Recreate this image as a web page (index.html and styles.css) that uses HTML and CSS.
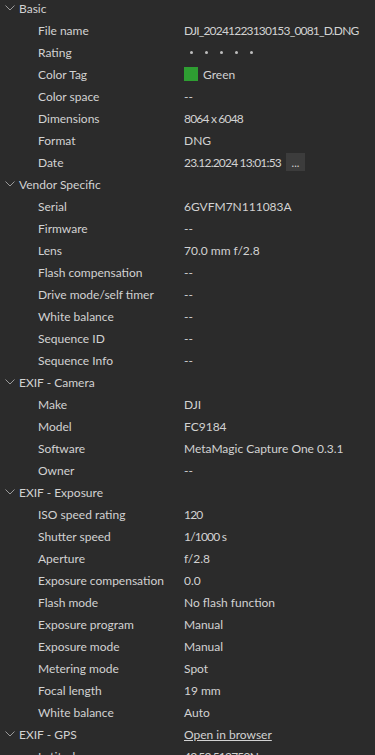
FILE: index.html
```html
<!DOCTYPE html>
<html>
<head>
<meta charset="utf-8">
<link rel="stylesheet" href="styles.css">
</head>
<body>
<div class="panel">
<div class="list">
  <div class="hdr"><svg class="chev" width="10" height="6" viewBox="0 0 10 6"><path d="M0.5 0.5 L5 5 L9.5 0.5" fill="none" stroke="#9a9a9a" stroke-width="1"/></svg><span class="hk">Basic</span></div>
  <div class="row"><span class="k">File name</span><span class="v num">DJI_20241223130153_0081_D.DNG</span></div>
  <div class="row"><span class="k">Rating</span><span class="v dots"><i></i><i></i><i></i><i></i><i></i></span></div>
  <div class="row"><span class="k">Color Tag</span><span class="v tag"><b class="sq"></b>Green</span></div>
  <div class="row"><span class="k">Color space</span><span class="v">--</span></div>
  <div class="row"><span class="k">Dimensions</span><span class="v num">8064 x 6048</span></div>
  <div class="row"><span class="k">Format</span><span class="v">DNG</span></div>
  <div class="row"><span class="k">Date</span><span class="v"><span class="num">23.12.2024 13:01:53</span><span class="btn">...</span></span></div>

  <div class="hdr"><svg class="chev" width="10" height="6" viewBox="0 0 10 6"><path d="M0.5 0.5 L5 5 L9.5 0.5" fill="none" stroke="#9a9a9a" stroke-width="1"/></svg><span class="hk">Vendor Specific</span></div>
  <div class="row"><span class="k">Serial</span><span class="v">6GVFM7N111083A</span></div>
  <div class="row"><span class="k">Firmware</span><span class="v">--</span></div>
  <div class="row"><span class="k">Lens</span><span class="v">70.0 mm f/2.8</span></div>
  <div class="row"><span class="k">Flash compensation</span><span class="v">--</span></div>
  <div class="row"><span class="k">Drive mode/self timer</span><span class="v">--</span></div>
  <div class="row"><span class="k">White balance</span><span class="v">--</span></div>
  <div class="row"><span class="k">Sequence ID</span><span class="v">--</span></div>
  <div class="row"><span class="k">Sequence Info</span><span class="v">--</span></div>

  <div class="hdr"><svg class="chev" width="10" height="6" viewBox="0 0 10 6"><path d="M0.5 0.5 L5 5 L9.5 0.5" fill="none" stroke="#9a9a9a" stroke-width="1"/></svg><span class="hk">EXIF - Camera</span></div>
  <div class="row"><span class="k">Make</span><span class="v">DJI</span></div>
  <div class="row"><span class="k">Model</span><span class="v">FC9184</span></div>
  <div class="row"><span class="k">Software</span><span class="v">MetaMagic Capture One 0.3.1</span></div>
  <div class="row"><span class="k">Owner</span><span class="v">--</span></div>

  <div class="hdr"><svg class="chev" width="10" height="6" viewBox="0 0 10 6"><path d="M0.5 0.5 L5 5 L9.5 0.5" fill="none" stroke="#9a9a9a" stroke-width="1"/></svg><span class="hk">EXIF - Exposure</span></div>
  <div class="row"><span class="k">ISO speed rating</span><span class="v num">120</span></div>
  <div class="row"><span class="k">Shutter speed</span><span class="v num">1/1000 s</span></div>
  <div class="row"><span class="k">Aperture</span><span class="v">f/2.8</span></div>
  <div class="row"><span class="k">Exposure compensation</span><span class="v">0.0</span></div>
  <div class="row"><span class="k">Flash mode</span><span class="v">No flash function</span></div>
  <div class="row"><span class="k">Exposure program</span><span class="v">Manual</span></div>
  <div class="row"><span class="k">Exposure mode</span><span class="v">Manual</span></div>
  <div class="row"><span class="k">Metering mode</span><span class="v">Spot</span></div>
  <div class="row"><span class="k">Focal length</span><span class="v">19 mm</span></div>
  <div class="row"><span class="k">White balance</span><span class="v">Auto</span></div>

  <div class="hdr"><svg class="chev" width="10" height="6" viewBox="0 0 10 6"><path d="M0.5 0.5 L5 5 L9.5 0.5" fill="none" stroke="#9a9a9a" stroke-width="1"/></svg><span class="hk">EXIF - GPS</span><span class="v"><a class="link">Open in browser</a></span></div>
  <div class="row"><span class="k">Latitude</span><span class="v num">43.52.512759N</span></div>
</div>
</div>
</body>
</html>
```

FILE: styles.css
```css
html, body {
  margin: 0;
  padding: 0;
  background: #2b2b2b;
}
.panel {
  width: 375px;
  height: 755px;
  overflow: hidden;
  background: #2b2b2b;
  font-family: "Lato", "Noto Sans", sans-serif;
  font-size: 12px;
  color: #d2d2d2;
}
.list {
  margin-top: -3px;
}
.row, .hdr {
  height: 22px;
  display: flex;
  align-items: center;
  white-space: nowrap;
}
.hdr {
  padding-left: 5px;
}
.chev {
  display: block;
  margin-right: 4px;
  flex: none;
}
.hk {
  width: 165px;
  flex: none;
}
.row .k {
  padding-left: 38px;
  width: 146px;
  flex: none;
}
.v {
  display: flex;
  align-items: center;
}
.num {
  letter-spacing: -0.8px;
}
.dots {
  gap: 12px;
  padding-left: 6px;
}
.dots i {
  display: block;
  width: 3px;
  height: 3px;
  border-radius: 50%;
  background: #bdbdbd;
}
.sq {
  display: block;
  width: 14px;
  height: 14px;
  background: #2e9e32;
  margin-right: 5px;
}
.btn {
  display: inline-flex;
  align-items: center;
  justify-content: center;
  width: 19px;
  height: 18px;
  margin-left: 5px;
  background: #3c3c3c;
  font-size: 11px;
  letter-spacing: 0;
}
.link {
  color: #d2d2d2;
  text-decoration: underline;
}
```
